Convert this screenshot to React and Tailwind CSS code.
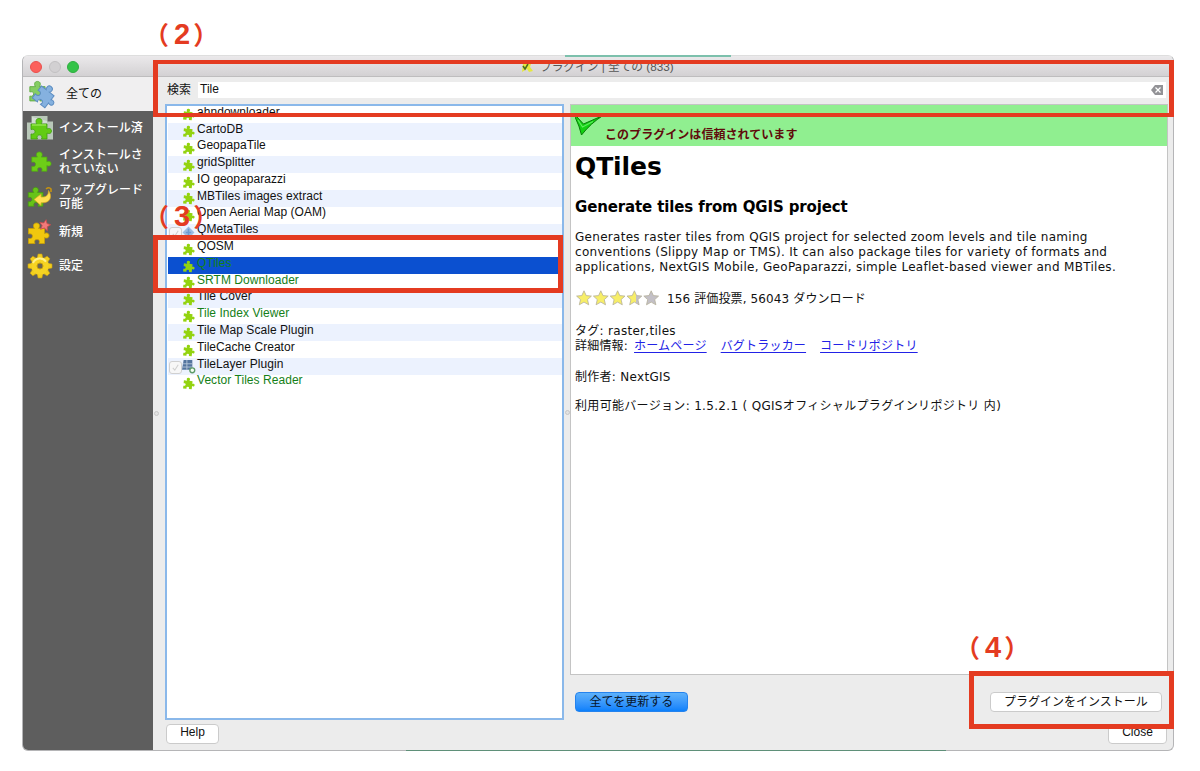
import React from 'react'
import clsx from 'clsx'

const PIECE =
  'M9 7C7.5 5.5 7.3 1.5 11 1.5C14.7 1.5 14.5 5.5 13 7H19V12C20.5 11 23.5 11.3 23.5 14C23.5 16.8 20.5 17 19 16V22H13.5C14.7 19.5 13.5 18 11.5 18C9.5 18 8.3 19.5 9.5 22H3V17C5.5 17.5 7 16.5 7 14.5C7 12.5 5 12 3 12.5V7Z'
const STAR = 'M8 0.8L10.2 5.6L15.4 6.1L11.5 9.6L12.7 14.8L8 12.1L3.3 14.8L4.5 9.6L0.6 6.1L5.8 5.6Z'

const plugins = [
  { name: 'ahndownloader' },
  { name: 'CartoDB' },
  { name: 'GeopapaTile' },
  { name: 'gridSplitter' },
  { name: 'IO geopaparazzi' },
  { name: 'MBTiles images extract' },
  { name: 'Open Aerial Map (OAM)' },
  { name: 'QMetaTiles', icon: 'diamond' },
  { name: 'QOSM' },
  { name: 'QTiles', green: true, selected: true },
  { name: 'SRTM Downloader', green: true },
  { name: 'Tile Cover' },
  { name: 'Tile Index Viewer', green: true },
  { name: 'Tile Map Scale Plugin' },
  { name: 'TileCache Creator' },
  { name: 'TileLayer Plugin', icon: 'layer' },
  { name: 'Vector Tiles Reader', green: true },
]

const navItems = [
  { lines: ['インストール済'], icon: 'installed', box: 'h-[34px]' },
  { lines: ['インストールさ', 'れていない'], icon: 'missing', box: 'h-[34px]' },
  { lines: ['アップグレード', '可能'], icon: 'upgrade', box: 'h-[35px]' },
  { lines: ['新規'], icon: 'fresh', box: 'h-[36px]' },
  { lines: ['設定'], icon: 'gear', box: 'h-[32px]' },
]

function AllIcon() {
  return (
    <svg width="28" height="28" viewBox="0 0 28 28" className="shrink-0 overflow-visible">
      <g transform="translate(-2 0) scale(.95)">
        <path d={PIECE} fill="#86cd63" stroke="#62ad45" strokeWidth="1" />
      </g>
      <g transform="translate(16.5 15.5) rotate(38) scale(1) translate(-12 -12)">
        <path d={PIECE} fill="#85b1df" stroke="#5c8dc2" strokeWidth="1" />
      </g>
    </svg>
  )
}

function Gear() {
  const teeth = [0, 45, 90, 135, 180, 225, 270, 315]
  return (
    <g>
      {teeth.map((a) => (
        <path key={a} d="M10.2 5L11.1 1H14.9L15.8 5Z" fill="#f3cf1c" stroke="#c79f10" strokeWidth=".6" transform={`rotate(${a} 13 13)`} />
      ))}
      <circle cx="13" cy="13" r="8.9" fill="#f6d423" />
      <path d="M6 10A7.6 7.6 0 0 1 19 8.6" stroke="#fff08a" strokeWidth="2" fill="none" />
      <circle cx="13" cy="13" r="3" fill="#6b6650" stroke="#c79f10" strokeWidth="1" />
    </g>
  )
}

function NavIcon({ type }) {
  return (
    <svg width="26" height="26" viewBox="0 0 26 26" className="shrink-0 overflow-visible">
      {type === 'installed' && (
        <>
          <path d="M4.5 1H20.5V6.5H26V24.5H0V7.5H4.5Z" fill="#b9c8b9" />
          <path d="M5 2L20 6V8L5 8Z" fill="#d3ddd3" />
          <g transform="translate(1 2)">
            <path d={PIECE} fill="#62cc14" stroke="#3f9d10" strokeWidth=".8" />
            <path d="M4 8H18" stroke="#93e64c" strokeWidth="1.4" />
          </g>
        </>
      )}
      {type === 'missing' && (
        <g transform="translate(2 1.5) scale(.94)">
          <path d={PIECE} fill="#6dce17" stroke="#4fae10" strokeWidth=".8" />
        </g>
      )}
      {type === 'upgrade' && (
        <>
          <g transform="translate(-1.5 2) scale(.92)">
            <path d={PIECE} fill="#67c318" stroke="#459a10" strokeWidth=".8" />
          </g>
          <path d="M7 15.5L14 10V13C19 13.4 21.5 11.5 21.5 6.5C25.5 12 24 19.5 14 18.8V21.5Z" fill="#ffe052" stroke="#d9a520" strokeWidth=".7" />
          <path d="M19 5Q22 2.5 24 5V8" stroke="#c79310" strokeWidth="1.6" fill="none" />
        </>
      )}
      {type === 'fresh' && (
        <>
          <g transform="translate(-1.5 2.5) scale(1)">
            <path d={PIECE} fill="#f0c80e" stroke="#c9a008" strokeWidth=".8" />
          </g>
          <g transform="translate(12 0) rotate(12 6 6) scale(.75)">
            <path d={STAR} fill="#f27a7a" stroke="#c94a4a" strokeWidth="1" />
          </g>
        </>
      )}
      {type === 'gear' && <Gear />}
    </svg>
  )
}

function RowIcon({ type }) {
  return (
    <svg width="13" height="13" viewBox="0 0 24 24" className="mr-[2px] mt-px shrink-0 overflow-visible">
      {!type && <path d={PIECE} fill="#93d30f" transform="rotate(6 12 12)" />}
      {type === 'diamond' && (
        <>
          <path d="M12 1L23 12L12 23L1 12Z" fill="#9cbde3" />
          <path d="M12 5V19M7 12H17" stroke="#6f9bd0" strokeWidth="3" />
        </>
      )}
      {type === 'layer' && (
        <>
          <path d="M3 0H19V18H0Z" fill="#53749e" />
          <path d="M1 7H19M1 13H19M9 0V18" stroke="#b8c8dc" strokeWidth="1.6" />
          <circle cx="19" cy="19" r="4.5" fill="#f4fff4" stroke="#5b9a68" strokeWidth="2.5" />
        </>
      )}
    </svg>
  )
}

function PluginRow({ plugin, index }) {
  return (
    <div
      className={clsx(
        'flex h-[16.8px] items-center',
        plugin.selected ? 'bg-[#0b50d0]' : index % 2 === 1 ? 'bg-[#ecf2fe]' : 'bg-white'
      )}
    >
      <span className="flex w-[14px] shrink-0 justify-end pt-[3px]">
        {plugin.icon && (
          <span className="flex h-[13px] w-[13px] items-center justify-center rounded-[3px] border border-[#d0d0d0] bg-[#f7f7f7]">
            <svg width="9" height="9" viewBox="0 0 10 10">
              <path d="M2 5.5L4.2 8L8 2" fill="none" stroke="#cfcfcf" strokeWidth="1.2" />
            </svg>
          </span>
        )}
      </span>
      <RowIcon type={plugin.icon} />
      <span className={clsx('-mt-[5.4px] whitespace-nowrap text-[12px] tracking-[0.05px]', plugin.green ? 'text-[#148018]' : 'text-[#111]')}>
        {plugin.name}
      </span>
    </div>
  )
}

function Sidebar() {
  return (
    <nav className="w-[130px] shrink-0 bg-[#5e5e5e] text-[12px] font-medium leading-[14px] text-white">
      <div className="flex h-[34px] items-center gap-[9px] bg-[#f0eff0] pl-[6px] font-normal text-[#111]">
        <AllIcon />
        <span>全ての</span>
      </div>
      {navItems.map((item) => (
        <div key={item.icon} className={clsx('flex items-center gap-[6px] pl-[4px]', item.box)}>
          <NavIcon type={item.icon} />
          <span className="whitespace-nowrap">
            {item.lines.map((l) => (
              <span key={l} className="block">{l}</span>
            ))}
          </span>
        </div>
      ))}
    </nav>
  )
}

function Rating() {
  const fills = ['#f7ee68', '#f7ee68', '#f7ee68', 'url(#partial)', '#c3c0c6']
  return (
    <svg width="84" height="16" viewBox="0 0 84 16" className="ml-[1px] mr-[7px] -mt-[3px] shrink-0">
      <defs>
        <linearGradient id="partial">
          <stop offset=".6" stopColor="#f7ee68" />
          <stop offset=".6" stopColor="#c3c0c6" />
        </linearGradient>
      </defs>
      {fills.map((f, i) => (
        <path key={i} d={STAR} fill={f} stroke="#b5b09a" strokeWidth=".8" transform={`translate(${i * 16.8} 0)`} />
      ))}
    </svg>
  )
}

function Details() {
  const link = 'text-[#2222e6] underline underline-offset-2'
  return (
    <section className="h-[571px] overflow-hidden border border-[#c4c4c4] bg-white font-['DejaVu_Sans','Noto_Sans_CJK_JP',sans-serif] text-[12px] leading-[15px] text-[#111]">
      <div className="flex h-[41px] items-end bg-[#90ef90] pl-[4px]">
        <svg width="28" height="30" viewBox="0 0 28 30" className="mb-[10px] shrink-0">
          <path d="M0 7L2 11L8.5 18L28 9.5Q16 17 6.5 29Q4.5 20 0 11Z" fill="#12d012" stroke="#087c08" strokeWidth="1" />
          <path d="M3 14L7.5 21L18 15.5" fill="none" stroke="#5cec5c" strokeWidth="1.2" />
        </svg>
        <span className="mb-[3px] ml-[2px] text-[12px] font-bold tracking-[0.05px] text-[#600b0b]">このプラグインは信頼されています</span>
      </div>
      <div className="pl-[4px]">
        <h1 className="h-[42px] whitespace-nowrap text-[25px] font-bold leading-[41px] tracking-[-0.1px] text-black">QTiles</h1>
        <h2 className="h-[38px] whitespace-nowrap text-[15px] font-bold leading-[38px] tracking-[-0.13px] text-black">Generate tiles from QGIS project</h2>
        <p className="mt-[4px] whitespace-nowrap tracking-[0.29px]">
          Generates raster tiles from QGIS project for selected zoom levels and tile naming<br />
          conventions (Slippy Map or TMS). It can also package tiles for variety of formats and<br />
          applications, NextGIS Mobile, GeoPaparazzi, simple Leaflet-based viewer and MBTiles.
        </p>
        <div className="mt-[12px] flex h-[24px] items-center whitespace-nowrap tracking-[0.12px]">
          <Rating />
          <span>156 評価投票, 56043 ダウンロード</span>
        </div>
        <p className="mt-[13px] h-[15px] tracking-[0.29px]">タグ: raster,tiles</p>
        <p className="flex h-[15px] whitespace-nowrap tracking-[0.2px]">
          <span className="mr-[6px]">詳細情報:</span>
          <span className="flex gap-[14px]">
            <a className={link}>ホームページ</a>
            <a className={link}>バグトラッカー</a>
            <a className={link}>コードリポジトリ</a>
          </span>
        </p>
        <p className="mt-[16px] h-[15px] tracking-[0.29px]">制作者: NextGIS</p>
        <p className="mt-[14px] h-[15px] whitespace-nowrap tracking-[0.32px]">利用可能バージョン: 1.5.2.1 ( QGISオフィシャルプラグインリポジトリ 内)</p>
      </div>
    </section>
  )
}

function Button({ className, children }) {
  return (
    <button
      type="button"
      className={clsx('flex items-center justify-center whitespace-nowrap rounded-[4px] border text-[12px] leading-none', className)}
    >
      {children}
    </button>
  )
}

function Handle() {
  return (
    <span className="flex w-[6px] shrink-0 items-center justify-center">
      <span className="h-[5px] w-[5px] rounded-full border border-[#c6c6c6] bg-[#e2e2e2]" />
    </span>
  )
}

function Mark({ n, className }) {
  return (
    <div className={clsx("absolute flex items-center leading-none text-[#e43b21] font-['Noto_Sans_CJK_JP',sans-serif] font-bold", className)}>
      <span className="text-[25px]">（</span>
      <span className="ml-[5px] font-['Liberation_Sans',sans-serif] text-[29px]">{n}</span>
      <span className="ml-[3px] text-[25px]">）</span>
    </div>
  )
}

export default function App() {
  return (
    <div className="relative h-[771px] w-[1200px] overflow-hidden bg-white pl-[22px] pt-[55px] font-['Liberation_Sans','Noto_Sans_CJK_JP',sans-serif]">
      <div className="flex h-[696px] w-[1152px] flex-col overflow-hidden rounded-[6px] border border-[#b5b5b7] border-t-[#dedede] bg-[#ececec]">
        <header className="flex h-[21px] shrink-0 items-center border-b border-[#bebdbe] bg-linear-to-b from-[#ebe9eb] to-[#d3d1d3]">
          <div className="flex w-[480px] gap-[6.5px] pl-[7px] pt-px">
            <span className="h-3 w-3 rounded-full border border-[#e9504d] bg-[#fc605c]" />
            <span className="h-3 w-3 rounded-full border border-[#c2c0c2] bg-[#d2d0d2]" />
            <span className="h-3 w-3 rounded-full border border-[#2fae40] bg-[#34c348]" />
          </div>
          <div className="flex items-center gap-[6px] pl-[18px] pt-[2px] text-[11.7px] text-[#555]">
            <svg width="13" height="13" viewBox="0 0 13 13">
              <path d="M2 3L7 2L11 1L9 7L12 11L8 12L6 9L1 12Z" fill="#e5e83e" />
              <path d="M2 6L4 9L7 4" fill="none" stroke="#496b22" strokeWidth="1.5" />
            </svg>
            <span className="whitespace-nowrap">プラグイン | 全ての (833)</span>
          </div>
        </header>

        <div className="flex min-h-0 flex-1">
          <Sidebar />
          <Handle />
          <div className="flex min-w-0 flex-1 flex-col pl-[6px] pr-[5px]">
            <div className="flex h-[27px] shrink-0 items-center gap-[7px] pl-[2px] pr-[2px] text-[12px] text-[#111]">
              <span className="-mt-[2px] shrink-0">検索</span>
              <div className="-mt-[2px] flex h-[16px] flex-1 items-center justify-between bg-white pr-[3px]">
                <span className="-mt-px pl-[2px]">Tile</span>
                <svg width="12" height="10" viewBox="0 0 12 10">
                  <path d="M4 0H12V10H4L0 5Z" fill="#929296" />
                  <path d="M4.5 2.5L9.5 7.5M9.5 2.5L4.5 7.5" stroke="white" strokeWidth="1.2" />
                </svg>
              </div>
            </div>

            <div className="flex h-[616px] shrink-0">
              <div className="w-[399px] shrink-0 overflow-hidden border-[2.5px] border-[#8ab8ea] bg-white pl-px">
                {plugins.map((p, i) => (
                  <PluginRow key={p.name} plugin={p} index={i} />
                ))}
              </div>
              <Handle />
              <div className="min-w-0 flex-1">
                <Details />
                <div className="flex items-center justify-between pl-[5px] pr-[6px] pt-[17px]">
                  <Button className="h-[20px] w-[113px] border-[#2583ee] bg-linear-to-b from-[#5db1fb] to-[#0a80fb] pb-px text-[#06152b]">全てを更新する</Button>
                  <Button className="h-[20px] w-[172px] border-[#cbcbcb] bg-white pb-px text-[#111]">プラグインをインストール</Button>
                </div>
              </div>
            </div>

            <div className="flex justify-between px-px pt-[4px]">
              <Button className="h-[20px] w-[53px] border-[#cbcbcb] bg-white pb-[4px] text-[#111]">Help</Button>
              <Button className="h-[20px] w-[59px] border-[#cbcbcb] bg-white pb-[4px] text-[#111]">Close</Button>
            </div>
          </div>
        </div>
      </div>

      {/* slivers of the windows behind */}
      <div className="absolute left-[565px] top-[55px] h-[2px] w-[166px] bg-[#7cc0ac]" />
      <div className="absolute left-[406px] top-[750px] h-px w-[540px] bg-[#5f9079]" />

      {/* annotations */}
      <div className="absolute left-[153px] top-[60px] h-[57px] w-[1021px] border-x-[5px] border-y-[4.5px] border-[#e43b21]" />
      <div className="absolute left-[153px] top-[235px] h-[58px] w-[410px] border-[5px] border-[#e43b21]" />
      <div className="absolute left-[969px] top-[671px] h-[58px] w-[205px] border-[5px] border-[#e43b21]" />
      <Mark n="2" className="left-[144px] top-[20px]" />
      <Mark n="3" className="left-[144px] top-[202px]" />
      <Mark n="4" className="left-[955px] top-[633px]" />
    </div>
  )
}
